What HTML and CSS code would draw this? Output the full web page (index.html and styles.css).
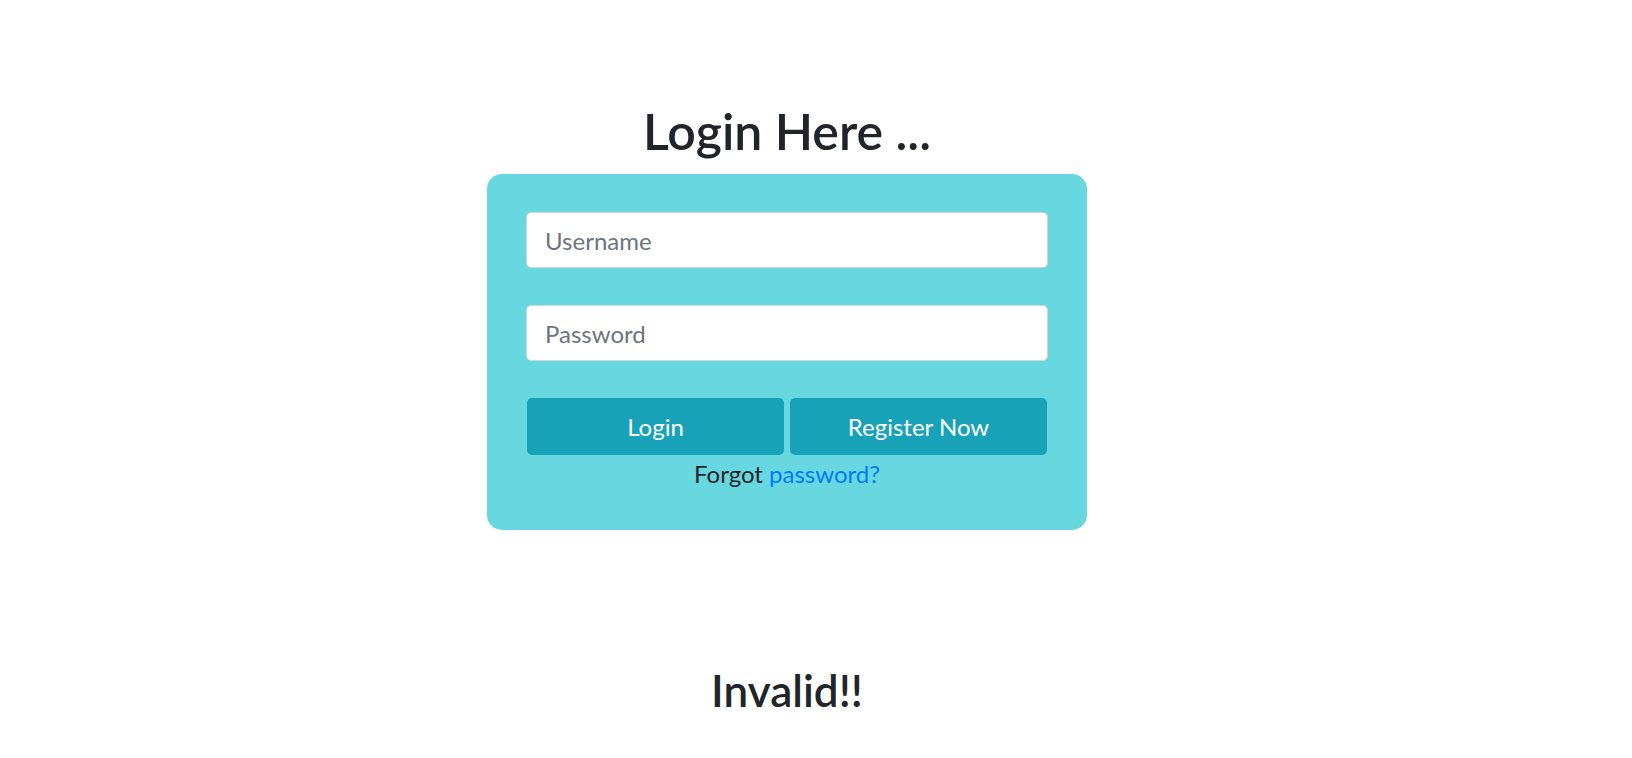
FILE: index.html
```html
<!DOCTYPE html>
<html lang="en">
<head>
<meta charset="utf-8">
<title>Login</title>
<link rel="stylesheet" href="styles.css">
</head>
<body>
<main class="page">
  <h1 class="title">Login Here ...</h1>
  <form class="card">
    <input class="field" type="text" placeholder="Username">
    <input class="field field-gap" type="password" placeholder="Password">
    <div class="actions">
      <button class="btn" type="button">Login</button>
      <button class="btn" type="button">Register Now</button>
    </div>
    <p class="forgot">Forgot <a href="#" class="link">password?</a></p>
  </form>
  <h2 class="message">Invalid!!</h2>
</main>
</body>
</html>
```
FILE: styles.css
```css
html, body {
  margin: 0;
  padding: 0;
  background: #ffffff;
}
body {
  font-family: "Lato", "Open Sans", sans-serif;
  color: #212529;
}
.page {
  display: flex;
  flex-direction: column;
  align-items: center;
  padding-top: 101px;
  padding-right: 58px;
}
.title {
  margin: 0 0 13px;
  font-size: 50px;
  line-height: 60px;
  font-weight: 600;
}
.card {
  box-sizing: border-box;
  width: 600px;
  height: 356px;
  padding: 38px 40px 0;
  background: #67d8e0;
  border-radius: 15px;
  display: flex;
  flex-direction: column;
}
.field {
  box-sizing: border-box;
  display: block;
  width: 522px;
  height: 56px;
  margin: 0 -1px;
  padding: 0 18px;
  border: 1px solid #ced4da;
  border-radius: 5px;
  background: #fff;
  font-family: inherit;
  font-size: 24px;
  color: #495057;
  outline: none;
}
.field::placeholder {
  color: #6c757d;
}
.field-gap {
  margin-top: 37px;
}
.actions {
  margin-top: 37px;
  display: grid;
  grid-template-columns: 1fr 1fr;
  gap: 6px;
}
.btn {
  height: 57px;
  border: none;
  border-radius: 5px;
  background: #17a2b8;
  color: #fff;
  font-family: inherit;
  font-size: 24px;
  padding: 0;
}
.forgot {
  margin: 4px 0 0;
  text-align: center;
  font-size: 24px;
  line-height: 30px;
}
.link {
  color: #007bff;
  text-decoration: none;
}
.message {
  margin: 134px 0 0;
  font-size: 44px;
  line-height: 53px;
  font-weight: 600;
}
```
